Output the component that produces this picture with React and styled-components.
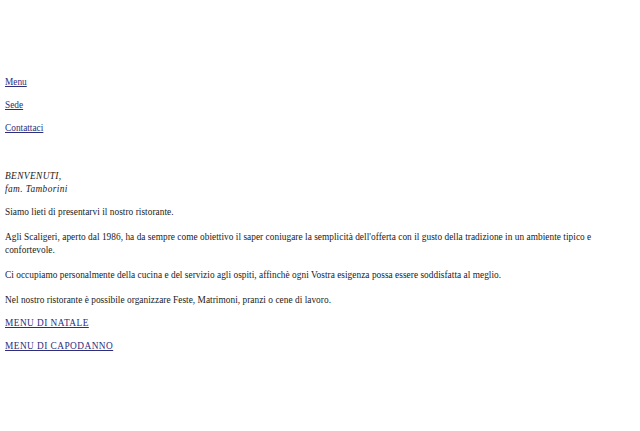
import styled, { createGlobalStyle } from "styled-components";

const GlobalStyle = createGlobalStyle`
  html, body {
    margin: 0;
    padding: 0;
    background: #fff;
  }
  body {
    font-family: "Liberation Serif", "Times New Roman", serif;
    font-size: 7pt;
    color: #1a1a1a;
  }
`;

const Page = styled.div`
  padding: 76px 5px 0;
`;

const Nav = styled.nav`
  display: flex;
  flex-direction: column;
  align-items: flex-start;
  gap: 10px;
`;

const Link = styled.a`
  color: #2e2e7c;
  text-decoration: underline;
  line-height: 13px;
  letter-spacing: ${(p) => (p.$caps ? "0.45px" : "0")};
`;

const Content = styled.div`
  margin-top: 35px;
  display: flex;
  flex-direction: column;
  gap: 10px;
`;

const Greeting = styled.p`
  font-style: italic;
  line-height: 13px;
  letter-spacing: 0.4px;
  margin: 0;
`;

const Article = styled.div`
  display: flex;
  flex-direction: column;
  gap: 12px;
`;

const Text = styled.p`
  line-height: 13px;
  letter-spacing: 0.03px;
  margin: 0;
`;

const Links = styled.div`
  display: flex;
  flex-direction: column;
  align-items: flex-start;
  gap: 10px;
`;

export default function App() {
  return (
    <>
      <GlobalStyle />
      <Page>
        <Nav>
          <Link href="#">Menu</Link>
          <Link href="#">Sede</Link>
          <Link href="#">Contattaci</Link>
        </Nav>
        <Content>
          <Greeting>
            BENVENUTI,
            <br />
            fam. Tamborini
          </Greeting>
          <Article>
            <Text>Siamo lieti di presentarvi il nostro ristorante.</Text>
            <Text>
              Agli Scaligeri, aperto dal 1986, ha da sempre come obiettivo il saper coniugare la semplicità dell'offerta con il gusto della tradizione in un ambiente tipico e confortevole.
            </Text>
            <Text>
              Ci occupiamo personalmente della cucina e del servizio agli ospiti, affinchè ogni Vostra esigenza possa essere soddisfatta al meglio.
            </Text>
            <Text>
              Nel nostro ristorante è possibile organizzare Feste, Matrimoni, pranzi o cene di lavoro.
            </Text>
          </Article>
          <Links>
            <Link href="#" $caps>MENU DI NATALE</Link>
            <Link href="#" $caps>MENU DI CAPODANNO</Link>
          </Links>
        </Content>
      </Page>
    </>
  );
}
